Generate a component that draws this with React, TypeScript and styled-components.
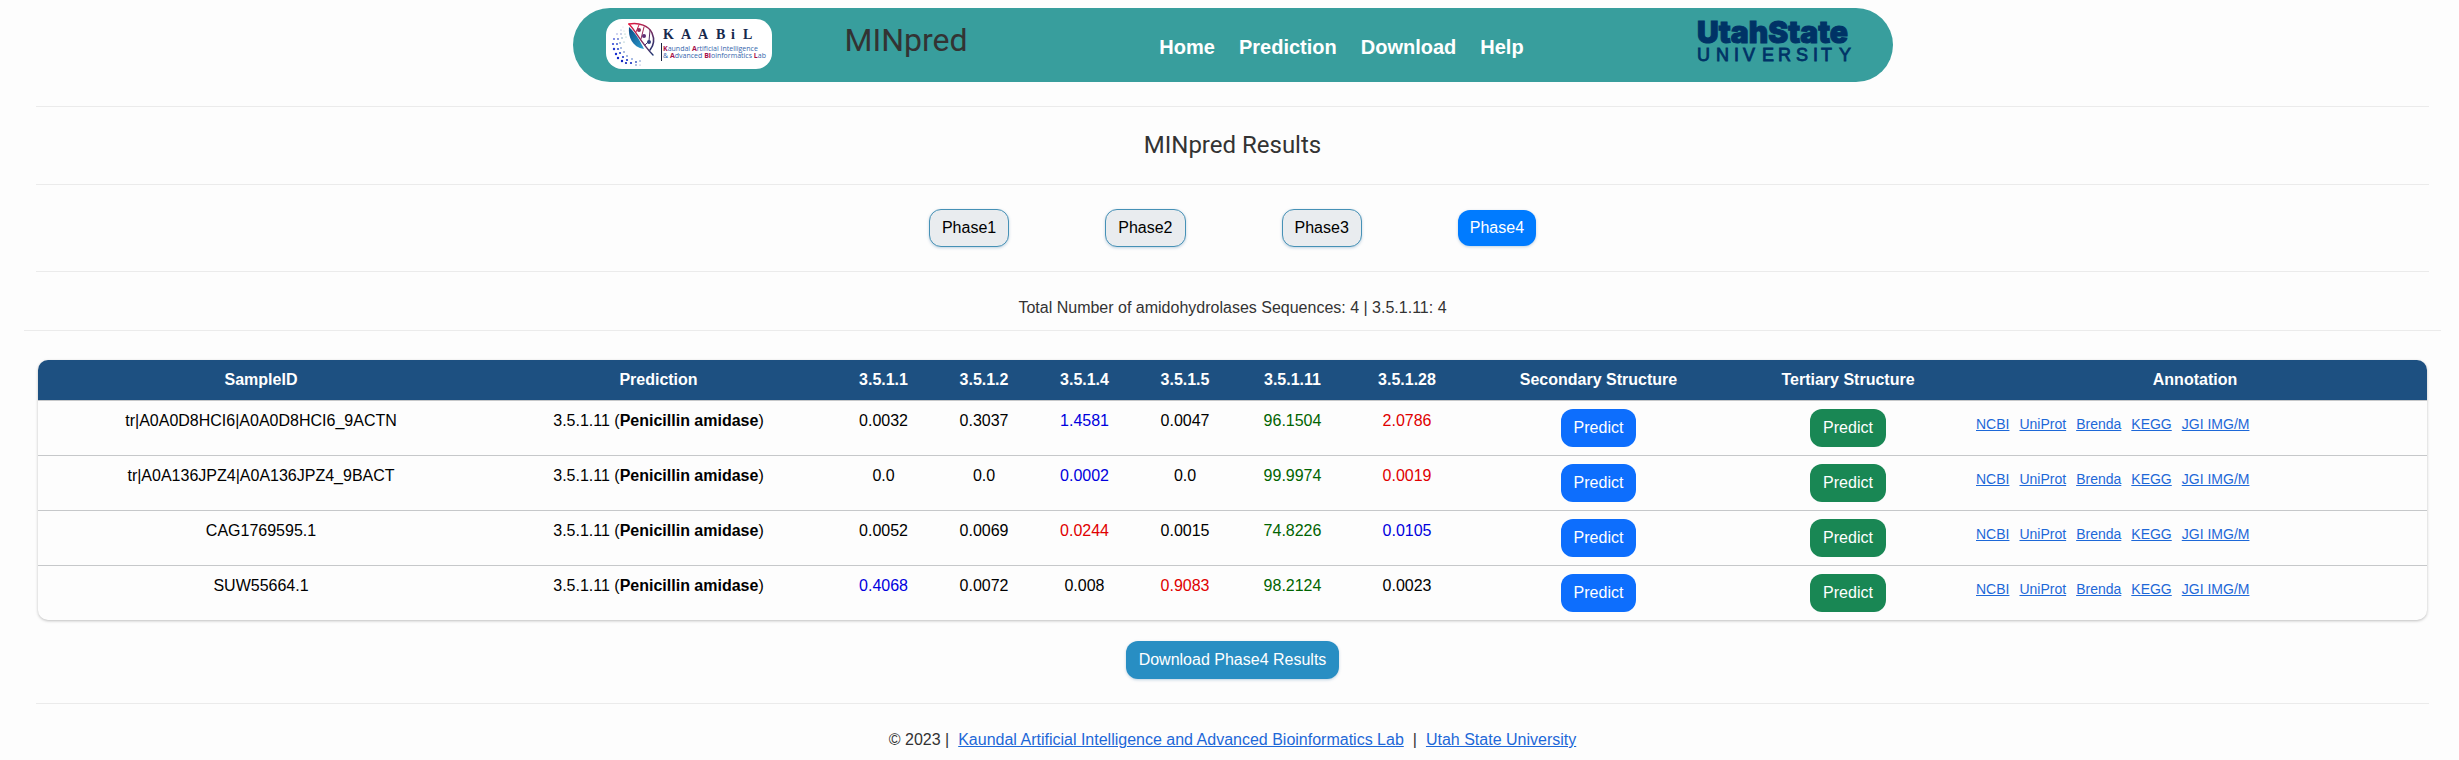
import React from "react";
import styled, { createGlobalStyle } from "styled-components";

const GlobalStyle = createGlobalStyle`
  *, *::before, *::after { box-sizing: border-box; }
  body {
    margin: 0;
    background: #fdfdfd;
    color: #333333;
    font: 16px/24px "Liberation Sans", Arial, sans-serif;
  }
`;

const Page = styled.div`
  padding: 8px 30px 32px 36px;
`;

const Header = styled.header`
  display: flex;
  align-items: center;
  width: 100%;
  max-width: 1320px;
  height: 74px;
  margin: 0 auto;
  padding: 0 40px 0 33px;
  border-radius: 37px;
  background: #389e9d;
`;

const LabLogo = styled.svg`
  flex: none;
  width: 166px;
  height: 50px;
  margin-bottom: 2px;
`;

const Brand = styled.h1`
  margin: 0 0 10px 73px;
  color: #333333;
  font: 400 32px/38px Roboto, sans-serif;
`;

const Nav = styled.nav`
  display: flex;
  gap: 24px;
  margin: 4px auto 0;
  padding-left: 18px;
`;

const NavLink = styled.a`
  color: #ffffff;
  font-size: 20px;
  font-weight: 700;
  line-height: 30px;
  text-decoration: none;
`;

const UniversityLogo = styled.svg`
  flex: none;
  width: 155px;
  height: 42px;
  margin-bottom: 8px;
  overflow: visible;
`;

const Rule = styled.hr<{ $wide?: boolean }>`
  height: 1px;
  margin: ${({ $wide }) => ($wide ? "10px -12px 29px" : "24px 0")};
  border: 0;
  background: #ebebeb;
`;

const Title = styled.h2`
  margin: 0;
  color: #333333;
  font: 400 24px/29px Roboto, sans-serif;
  text-align: center;
`;

const PhaseBar = styled.div`
  display: flex;
  justify-content: center;
  align-items: center;
  gap: 96px;
  height: 38px;
`;

const Button = styled.button`
  padding: 6px 12px;
  border: 1px solid transparent;
  border-radius: 12px;
  color: #ffffff;
  font: inherit;
`;

const PhaseButton = styled(Button)<{ $active?: boolean }>`
  border: ${({ $active }) => ($active ? "0" : "1px solid #4691b6")};
  background: ${({ $active }) => ($active ? "#007bff" : "#e9ecef")};
  color: ${({ $active }) => ($active ? "#ffffff" : "#000000")};
  box-shadow: 0 1px 3px rgba(0, 80, 140, 0.25);
`;

const PredictButton = styled(Button)<{ $tone: "primary" | "success" }>`
  display: block;
  margin: 0 auto;
  background: ${({ $tone }) => ($tone === "primary" ? "#0d6efd" : "#198754")};
`;

const DownloadButton = styled(Button)`
  display: block;
  margin: 21px auto 0;
  background: #288ec3;
  box-shadow: 0 1px 3px rgba(0, 80, 140, 0.25);
`;

const Summary = styled.p`
  margin: 0;
  text-align: center;
`;

const ResultsPanel = styled.section`
  margin: 0 2px;
  border-radius: 10px;
  overflow: hidden;
  box-shadow: 0 1px 3px rgba(0, 0, 0, 0.25);
`;

const Results = styled.table`
  width: 100%;
  table-layout: fixed;
  border-collapse: separate;
  border-spacing: 0;
  color: #000000;
`;

const HeadCell = styled.th`
  padding: 8px;
  background: #1d5081;
  color: #ffffff;
  font-weight: 700;
`;

const Cell = styled.td<{ $left?: boolean; $color?: string }>`
  height: 55px;
  padding: 8px;
  border-top: 1px solid #c6c8ca;
  color: ${({ $color }) => $color ?? "#000000"};
  text-align: ${({ $left }) => ($left ? "left" : "center")};
  vertical-align: top;
`;

const Annotations = styled.div`
  display: flex;
  gap: 10px;
  padding: 3px 5px 0;
  font-size: 14px;
`;

const Link = styled.a`
  color: #1d68d8;
`;

const Footer = styled.footer`
  display: flex;
  justify-content: center;
  gap: 9px;
`;

const Initial = styled.tspan`
  fill: #a8114b;
  font-weight: 700;
`;

const columns: { label: string; width: number }[] = [
  { label: "SampleID", width: 446 },
  { label: "Prediction", width: 349 },
  { label: "3.5.1.1", width: 101 },
  { label: "3.5.1.2", width: 100 },
  { label: "3.5.1.4", width: 101 },
  { label: "3.5.1.5", width: 100 },
  { label: "3.5.1.11", width: 115 },
  { label: "3.5.1.28", width: 114 },
  { label: "Secondary Structure", width: 269 },
  { label: "Tertiary Structure", width: 230 },
  { label: "Annotation", width: 464 },
];

// Scores are coloured by rank: best green, runners-up red and blue.
type Tone = "" | "r" | "g" | "b";
const toneColors: Record<Tone, string> = { "": "#000000", r: "#e00000", g: "#006400", b: "#0000dd" };

const rows: { id: string; scores: [string, Tone][] }[] = [
  { id: "tr|A0A0D8HCI6|A0A0D8HCI6_9ACTN", scores: [["0.0032", ""], ["0.3037", ""], ["1.4581", "b"], ["0.0047", ""], ["96.1504", "g"], ["2.0786", "r"]] },
  { id: "tr|A0A136JPZ4|A0A136JPZ4_9BACT", scores: [["0.0", ""], ["0.0", ""], ["0.0002", "b"], ["0.0", ""], ["99.9974", "g"], ["0.0019", "r"]] },
  { id: "CAG1769595.1", scores: [["0.0052", ""], ["0.0069", ""], ["0.0244", "r"], ["0.0015", ""], ["74.8226", "g"], ["0.0105", "b"]] },
  { id: "SUW55664.1", scores: [["0.4068", "b"], ["0.0072", ""], ["0.008", ""], ["0.9083", "r"], ["98.2124", "g"], ["0.0023", ""]] },
];

const databases = ["NCBI", "UniProt", "Brenda", "KEGG", "JGI IMG/M"];

// Halo of dots that curls round the left side of the leaf.
const dots: [number, number, number, string][] = [
  [17, 8, 0.4, "#9aa5cf"], [15, 11, 0.6, "#8f9ad0"], [18, 12, 0.4, "#7fb0a0"],
  [11, 15, 0.7, "#7f8cd8"], [15, 15, 0.7, "#6b7fc0"], [19, 15, 0.5, "#6fae9c"],
  [8, 20, 1, "#5a6ade"], [12, 20, 0.9, "#5267c8"], [16, 19, 0.7, "#5a8fb0"], [20, 18, 0.5, "#79b7a4"],
  [7, 25, 1.1, "#3347d8"], [11, 25, 1, "#3b55c8"], [14, 24, 0.8, "#4a74b8"], [18, 23, 0.6, "#6aa0a8"],
  [8, 30, 1.2, "#2238d0"], [12, 30, 1.1, "#2e49c8"], [15, 29, 0.8, "#3f6abc"],
  [10, 35, 1.2, "#142cd0"], [14, 34, 1.1, "#2140c8"], [18, 33, 0.8, "#3b65b8"],
  [12, 39, 1.2, "#0c22c8"], [17, 38, 1.1, "#1a35c8"], [21, 37, 0.8, "#3960b8"],
  [16, 42, 1.2, "#0c1fc0"], [21, 41, 1.1, "#1632c8"], [26, 40, 0.8, "#3c66c0"],
  [20, 44, 1.1, "#0c1fb8"], [25, 44, 1.1, "#122cc0"], [30, 43, 0.9, "#3050b8"],
  [34, 42, 0.7, "#4a6cb8"], [30, 46, 0.7, "#3450b0"], [34, 46, 0.5, "#7080b8"],
];

function KaabilLogo() {
  return (
    <LabLogo viewBox="0 0 166 50" role="img" aria-label="KAABiL">
      <defs>
        <linearGradient id="vein" x1="0" y1="0" x2="1" y2="1">
          <stop offset="0" stopColor="#e3173e" />
          <stop offset="0.5" stopColor="#8d2a5c" />
          <stop offset="1" stopColor="#1c3470" />
        </linearGradient>
        <linearGradient id="blade" x1="0" y1="0" x2="1" y2="1">
          <stop offset="0" stopColor="#0a4a84" />
          <stop offset="1" stopColor="#2b9ed0" />
        </linearGradient>
      </defs>
      <rect width="166" height="50" rx="16" fill="#ffffff" />
      {dots.map(([x, y, r, fill], i) => (
        <circle key={i} cx={x} cy={y} r={r} fill={fill} />
      ))}
      <path d="M23 8 C22 18 26 28 38 30 C35 24 30 14 23 8Z" fill="url(#blade)" />
      <g fill="none" stroke="url(#vein)" strokeLinecap="round">
        <path d="M23 5 C33 3 43 7 46 14 C49 21 48 26 44 31" strokeWidth="1.6" />
        <path d="M23 5 C29 11 36 25 47 36" strokeWidth="1.4" />
        <path d="M30 13 L33 6 M35 20 L38 8 M39 26 L43 22 L44 11" strokeWidth="1" />
      </g>
      <circle cx="33" cy="11" r="2" fill="#8d2a5c" />
      <circle cx="38" cy="17" r="2" fill="#5d2f74" />
      <circle cx="43" cy="23" r="2" fill="#33407e" />
      <path d="M55.5 24V42" stroke="#1a2440" strokeWidth="1" />
      <text y="20" fill="#16294d" fontFamily="Liberation Serif, serif" fontWeight="700" fontSize="14">
        <tspan x="57">K</tspan><tspan x="75">A</tspan><tspan x="92">A</tspan><tspan x="110">B</tspan><tspan x="125">i</tspan><tspan x="137">L</tspan>
      </text>
      <g fill="#3566ad" fontFamily="Open Sans, sans-serif" fontSize="7">
        <text x="57" y="32">
          <Initial>K</Initial>aundal <Initial>A</Initial>rtificial Intelligence
        </text>
        <text x="57" y="39">
          &amp; <Initial>A</Initial>dvanced <Initial>Bi</Initial>oinformatics <Initial>L</Initial>ab
        </text>
      </g>
    </LabLogo>
  );
}

function UtahStateLogo() {
  return (
    <UniversityLogo viewBox="0 0 155 42" role="img" aria-label="Utah State University">
      <g fill="#003366" stroke="#003366" fontFamily="Liberation Sans, Arial, sans-serif">
        <text x="0" y="23" fontFamily="Inter, sans-serif" fontSize="30" fontWeight="900" strokeWidth="1">UtahState</text>
        <text y="41" fontSize="18" strokeWidth="0.8">
          <tspan x="0">U</tspan><tspan x="19">N</tspan><tspan x="37">I</tspan><tspan x="46">V</tspan><tspan x="65">E</tspan><tspan x="81">R</tspan><tspan x="99">S</tspan><tspan x="116">I</tspan><tspan x="124">T</tspan><tspan x="142">Y</tspan>
        </text>
      </g>
    </UniversityLogo>
  );
}

export default function App() {
  return (
    <>
      <GlobalStyle />
      <Page>
        <Header>
          <KaabilLogo />
          <Brand>MINpred</Brand>
          <Nav>
            {["Home", "Prediction", "Download", "Help"].map((item) => (
              <NavLink key={item} href="#">{item}</NavLink>
            ))}
          </Nav>
          <UtahStateLogo />
        </Header>
        <main>
          <Rule />
          <Title>MINpred Results</Title>
          <Rule />
          <PhaseBar>
            {[1, 2, 3, 4].map((n) => (
              <PhaseButton key={n} type="button" $active={n === 4}>Phase{n}</PhaseButton>
            ))}
          </PhaseBar>
          <Rule />
          <Summary>Total Number of amidohydrolases Sequences: 4 | 3.5.1.11: 4</Summary>
          <Rule $wide />
          <ResultsPanel>
            <Results>
              <colgroup>
                {columns.map(({ label, width }) => (
                  <col key={label} width={width} />
                ))}
              </colgroup>
              <thead>
                <tr>
                  {columns.map(({ label }) => (
                    <HeadCell key={label} scope="col">{label}</HeadCell>
                  ))}
                </tr>
              </thead>
              <tbody>
                {rows.map(({ id, scores }) => (
                  <tr key={id}>
                    <Cell>{id}</Cell>
                    <Cell>3.5.1.11 (<b>Penicillin amidase</b>)</Cell>
                    {scores.map(([score, tone], i) => (
                      <Cell key={i} $color={toneColors[tone]}>{score}</Cell>
                    ))}
                    <Cell><PredictButton type="button" $tone="primary">Predict</PredictButton></Cell>
                    <Cell><PredictButton type="button" $tone="success">Predict</PredictButton></Cell>
                    <Cell $left>
                      <Annotations>
                        {databases.map((name) => (
                          <Link key={name} href="#">{name}</Link>
                        ))}
                      </Annotations>
                    </Cell>
                  </tr>
                ))}
              </tbody>
            </Results>
          </ResultsPanel>
          <DownloadButton type="button">Download Phase4 Results</DownloadButton>
        </main>
        <Rule />
        <Footer>
          <span>© 2023 |</span>
          <Link href="#">Kaundal Artificial Intelligence and Advanced Bioinformatics Lab</Link>
          <span>|</span>
          <Link href="#">Utah State University</Link>
        </Footer>
      </Page>
    </>
  );
}
